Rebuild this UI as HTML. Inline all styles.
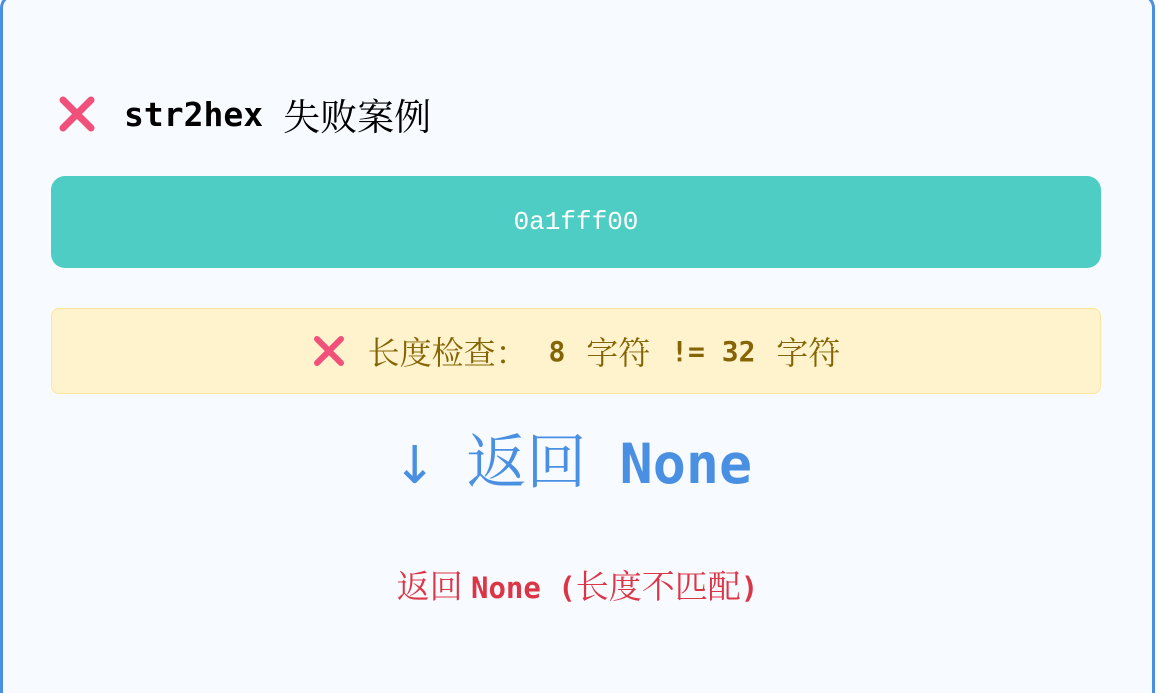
<!DOCTYPE html>
<html><head><meta charset="utf-8"><style>
html,body{margin:0;padding:0;width:1159px;height:693px;overflow:hidden;background:#fff;}
.card{position:absolute;left:0;top:-6px;width:1149px;height:696px;border:3px solid #4a90e2;border-bottom:none;border-radius:14px 14px 0 0;background:#f7faff;}
.serif{font-family:"Liberation Serif","Noto Serif CJK SC",serif;}
.mono{font-family:"DejaVu Sans Mono","Liberation Mono",monospace;font-weight:bold;}
.title{position:absolute;left:54px;height:46px;display:flex;align-items:center;font-size:37px;color:#000;}
.teal{position:absolute;left:48px;width:1050px;height:92px;background:#4ecdc4;border-radius:14px;color:#fff;font-family:"Liberation Mono",monospace;font-size:26px;text-align:center;line-height:92px;}
.warn{position:absolute;left:48px;width:1048px;height:84px;background:#fff3cd;border:1px solid #ffe69c;border-radius:8px;color:#856404;font-size:32px;display:flex;align-items:center;justify-content:center;white-space:pre;}
.ret{position:absolute;left:-5px;width:1149px;text-align:center;color:#4a90e2;font-size:60px;line-height:80px;}
.bot{position:absolute;left:0;width:1149px;text-align:center;color:#dc3545;font-size:33px;line-height:46px;white-space:pre;}
</style></head><body>
<div class="card">
<div class="title" style="top:94px"><svg width="40" height="40" viewBox="0 0 40 40"><path d="M6 6L34 34M34 6L6 34" stroke="#f0507a" stroke-width="7" stroke-linecap="round"/></svg><span class="mono" style="margin-left:27px;font-size:33px">str2hex</span><span class="serif" style="margin-left:20px">失败案例</span></div>
<div class="teal" style="top:179px">0a1fff00</div>
<div class="warn" style="top:311px"><svg width="34" height="34" viewBox="0 0 34 34" style="margin-right:22px"><path d="M5 5L29 29M29 5L5 29" stroke="#f0507a" stroke-width="6" stroke-linecap="round"/></svg><span class="serif">长度检查：</span><span class="mono" style="font-size:28px;margin:0 4px"> 8 </span><span class="serif">字符</span><span class="mono" style="font-size:28px;margin:0 4px"> != 32 </span><span class="serif">字符</span></div>
<div class="ret" style="top:426px"><span style="font-family:'DejaVu Sans',sans-serif;font-size:52px">↓</span><span class="serif" style="margin-left:30px">返回</span><span class="mono" style="font-size:55px">&nbsp;None</span></div>
<div class="bot" style="top:568px"><span class="serif">返回 </span><span class="mono" style="font-size:29px">None (</span><span class="serif">长度不匹配</span><span class="mono" style="font-size:29px">)</span></div>
</div>
</body></html>
